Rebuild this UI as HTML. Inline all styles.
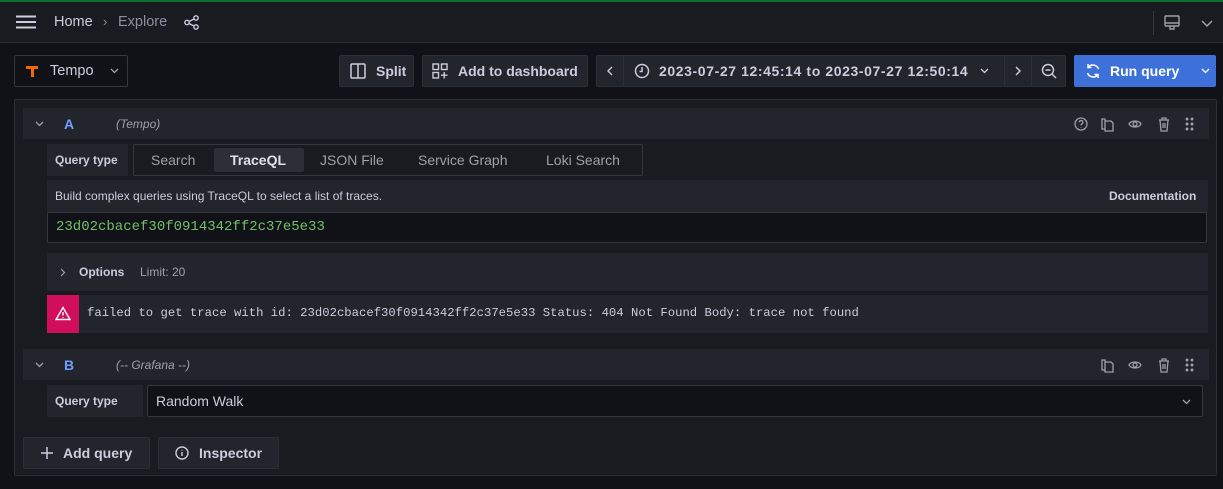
<!DOCTYPE html>
<html><head><style>
*{box-sizing:border-box;margin:0;padding:0}
body{width:1223px;height:489px;background:#111217;font-family:"Liberation Sans",sans-serif;color:#ccccdc;font-size:14px;position:relative;overflow:hidden}
.a{position:absolute}
.btn{position:absolute;background:#22252b;border:1px solid #2c2f36;border-radius:2px;display:flex;align-items:center;color:#ccccdc;font-weight:bold;font-size:14px}
.g{background:#22252b}
svg{display:block}
.mono{font-family:"Liberation Mono","DejaVu Sans Mono",monospace}
</style></head><body>
<div class="a" style="left:0;top:0;width:1223px;height:2px;background:#0f6b2b"></div>
<div class="a" style="left:0;top:2px;width:1223px;height:41px;background:#181b1f;border-bottom:1px solid #2c2f36"></div>
<svg class="a" style="left:16px;top:15px" width="20" height="14"><path d="M0 1.5h20M0 7h20M0 12.5h20" stroke="#ccccdc" stroke-width="2"/></svg>
<div class="a" style="left:54px;top:14px;font-size:14.5px;color:#ccccdc">Home</div>
<div class="a" style="left:103px;top:14px;font-size:13px;color:#8e8e9e">›</div>
<div class="a" style="left:118px;top:14px;font-size:14.5px;color:#8e8e9e">Explore</div>
<svg class="a" style="left:184px;top:15px" width="15" height="15"><g fill="none" stroke="#ccccdc" stroke-width="1.4"><circle cx="3" cy="7.5" r="2.2"/><circle cx="12" cy="3" r="2.2"/><circle cx="12" cy="12" r="2.2"/><path d="M5 6.5l5-2.5M5 8.5l5 2.5"/></g></svg>
<div class="a" style="left:1153px;top:11px;width:1px;height:24px;background:#34373e"></div>
<svg class="a" style="left:1164px;top:15px" width="17" height="16"><g fill="none" stroke="#9fa0a8" stroke-width="1.4"><rect x="1" y="1" width="14" height="10" rx="1"/><path d="M1 8h14M6 11v3h4v-3"/></g></svg>
<svg class="a" style="left:1201px;top:20px" width="12" height="8"><path d="M1 1l5 5 5-5" fill="none" stroke="#9fa0a8" stroke-width="1.5"/></svg>

<div class="btn" style="left:14px;top:55px;width:114px;height:32px;background:#111217;border-color:#34373e;font-weight:normal">
<svg style="margin-left:10px" width="14" height="14"><path d="M1 2h12v3H9v8H6V5H1z" fill="#f46800"/></svg><span style="margin-left:11px;font-size:14.5px">Tempo</span>
<svg style="margin-left:16px" width="9" height="6"><path d="M1 1l3.5 3.5L8 1" fill="none" stroke="#9fa0a8" stroke-width="1.3"/></svg></div>

<div class="btn" style="left:339px;top:55px;width:75px;height:32px"><svg style="margin-left:10px" width="16" height="16"><g fill="none" stroke="#ccccdc" stroke-width="1.5"><rect x="1" y="1" width="14" height="14" rx="1"/><path d="M8 1v14"/></g></svg><span style="margin-left:10px">Split</span></div>
<div class="btn" style="left:422px;top:55px;width:166px;height:32px"><svg style="margin-left:9px" width="16" height="16"><g fill="none" stroke="#ccccdc" stroke-width="1.4"><rect x="1" y="1" width="5.5" height="5.5"/><rect x="9.5" y="1" width="5.5" height="5.5"/><rect x="1" y="9.5" width="5.5" height="5.5"/><path d="M12.2 9v6.5M9 12.2h6.5"/></g></svg><span style="margin-left:10px">Add to dashboard</span></div>

<div class="btn" style="left:596px;top:55px;width:470px;height:32px;padding:0">
<div style="width:27px;height:100%;border-right:1px solid #2c2f36;display:flex;align-items:center;justify-content:center"><svg width="6" height="10"><path d="M5 1L1 5l4 4" fill="none" stroke="#ccccdc" stroke-width="1.4"/></svg></div>
<div style="width:381px;height:100%;border-right:1px solid #2c2f36;display:flex;align-items:center"><svg style="margin-left:10px" width="16" height="16"><g fill="none" stroke="#ccccdc" stroke-width="1.5"><circle cx="8" cy="8" r="6.5"/><path d="M8 4v4.5H5.5"/></g></svg><span style="margin-left:9px;letter-spacing:0.6px">2023-07-27 12:45:14 to 2023-07-27 12:50:14</span><svg style="margin-left:12px" width="9" height="6"><path d="M1 1l3.5 3.5L8 1" fill="none" stroke="#ccccdc" stroke-width="1.3"/></svg></div>
<div style="width:27px;height:100%;border-right:1px solid #2c2f36;display:flex;align-items:center;justify-content:center"><svg width="6" height="10"><path d="M1 1l4 4-4 4" fill="none" stroke="#ccccdc" stroke-width="1.4"/></svg></div>
<div style="flex:1;display:flex;align-items:center;justify-content:center"><svg width="16" height="16"><g fill="none" stroke="#ccccdc" stroke-width="1.5"><circle cx="7" cy="7" r="5.5"/><path d="M4.5 7h5M11 11l4 4"/></g></svg></div></div>

<div class="btn" style="left:1074px;top:55px;width:142px;height:32px;background:#3d71d9;border-color:#3d71d9;color:#fff">
<svg style="margin-left:10px" width="16" height="16"><g fill="none" stroke="#fff" stroke-width="1.5"><path d="M13.5 6A6 6 0 0 0 3 4.5M2.5 10a6 6 0 0 0 10.5 1.5"/><path d="M3 1v3.5h3.5M13 15v-3.5H9.5"/></g></svg><span style="margin-left:9px">Run query</span>
<svg style="margin-left:22px" width="9" height="6"><path d="M1 1l3.5 3.5L8 1" fill="none" stroke="#fff" stroke-width="1.3"/></svg></div>

<div class="a" style="left:14px;top:99px;width:1203px;height:377px;background:#181b1f;border:1px solid #2c2f36;border-radius:2px"></div>

<!-- A -->
<div class="a g" style="left:23px;top:108px;width:1186px;height:31px"></div>
<svg class="a" style="left:35px;top:121px" width="9" height="6"><path d="M1 1l3.5 3.5L8 1" fill="none" stroke="#9fa0a8" stroke-width="1.3"/></svg>
<div class="a" style="left:64px;top:116px;color:#6e9fff;font-weight:bold;font-size:14px">A</div>
<div class="a" style="left:116px;top:117px;color:#9fa0a8;font-style:italic;font-size:12px">(Tempo)</div>
<svg class="a" style="left:1073px;top:116px" width="130" height="16"><g fill="none" stroke="#9fa0a8" stroke-width="1.3"><circle cx="8" cy="8" r="6"/><path d="M6.3 6.3a1.8 1.8 0 1 1 2.4 1.7c-.6.3-.7.6-.7 1.3M8 11v.5"/><path d="M32 5h6l2 2v8h-8zM32 5V3h-3v10h3"/><path d="M56 8c2-4 10-4 12 0c-2 4-10 4-12 0z"/><circle cx="62" cy="8" r="2"/><path d="M86 4h10M89 4V2h4v2M87 4l1 11h6l1-11M90 7v5M92 7v5"/><circle cx="114" cy="3" r=".8" fill="#9fa0a8"/><circle cx="119" cy="3" r=".8" fill="#9fa0a8"/><circle cx="114" cy="8" r=".8" fill="#9fa0a8"/><circle cx="119" cy="8" r=".8" fill="#9fa0a8"/><circle cx="114" cy="13" r=".8" fill="#9fa0a8"/><circle cx="119" cy="13" r=".8" fill="#9fa0a8"/></g></svg>

<div class="a g" style="left:47px;top:144px;width:81px;height:32px;font-size:12px;font-weight:bold;display:flex;align-items:center;padding-left:8px;white-space:nowrap">Query type</div>
<div class="a" style="left:133px;top:144px;width:510px;height:32px;border:1px solid #34373e;border-radius:2px;background:#181b1f"></div>
<div class="a" style="left:214px;top:148px;width:90px;height:24px;background:#2c2f36;border-radius:2px"></div>
<div class="a" style="left:151px;top:152px;color:#9fa0a8;font-size:14px">Search</div>
<div class="a" style="left:230px;top:152px;color:#e0e0e8;font-size:14px;font-weight:bold">TraceQL</div>
<div class="a" style="left:320px;top:152px;color:#9fa0a8;font-size:14px">JSON File</div>
<div class="a" style="left:418px;top:152px;color:#9fa0a8;font-size:14px">Service Graph</div>
<div class="a" style="left:546px;top:152px;color:#9fa0a8;font-size:14px">Loki Search</div>

<div class="a g" style="left:47px;top:180px;width:1161px;height:33px"></div>
<div class="a" style="left:55px;top:189px;font-size:12px;color:#ccccdc">Build complex queries using TraceQL to select a list of traces.</div>
<div class="a" style="left:1109px;top:189px;font-size:12px;color:#ccccdc;font-weight:bold">Documentation</div>
<div class="a" style="left:47px;top:212px;width:1160px;height:31px;background:#111217;border:1px solid #34373e;border-radius:2px"></div>
<div class="a mono" style="left:56px;top:219px;font-size:14px;color:#73bf69">23d02cbacef30f0914342ff2c37e5e33</div>

<div class="a g" style="left:47px;top:253px;width:1161px;height:38px"></div>
<svg class="a" style="left:60px;top:268px" width="6" height="9"><path d="M1 1l3.5 3.5L1 8" fill="none" stroke="#9fa0a8" stroke-width="1.2"/></svg>
<div class="a" style="left:79px;top:265px;font-size:12px;font-weight:bold;color:#ccccdc">Options</div>
<div class="a" style="left:140px;top:265px;font-size:12px;color:#9fa0a8">Limit: 20</div>

<div class="a g" style="left:47px;top:295px;width:1161px;height:38px"></div>
<div class="a" style="left:47px;top:295px;width:32px;height:38px;background:#d10e5c"></div>
<svg class="a" style="left:55px;top:306px" width="16" height="15"><g fill="none" stroke="#fff" stroke-width="1.4"><path d="M8 1.5L15 13.5H1z"/><path d="M8 6v3.5M8 11v.8"/></g></svg>
<div class="a mono" style="left:87px;top:306px;font-size:12.25px;color:#ccccdc">failed to get trace with id: 23d02cbacef30f0914342ff2c37e5e33 Status: 404 Not Found Body: trace not found</div>

<!-- B -->
<div class="a g" style="left:23px;top:349px;width:1186px;height:31px"></div>
<svg class="a" style="left:35px;top:362px" width="9" height="6"><path d="M1 1l3.5 3.5L8 1" fill="none" stroke="#9fa0a8" stroke-width="1.3"/></svg>
<div class="a" style="left:64px;top:357px;color:#6e9fff;font-weight:bold;font-size:14px">B</div>
<div class="a" style="left:116px;top:358px;color:#9fa0a8;font-style:italic;font-size:12px">(-- Grafana --)</div>
<svg class="a" style="left:1097px;top:357px" width="106" height="16"><g fill="none" stroke="#9fa0a8" stroke-width="1.3"><path d="M8 5h6l2 2v8H8zM8 5V3H5v10h3"/><path d="M32 8c2-4 10-4 12 0c-2 4-10 4-12 0z"/><circle cx="38" cy="8" r="2"/><path d="M62 4h10M65 4V2h4v2M63 4l1 11h6l1-11M66 7v5M68 7v5"/><circle cx="90" cy="3" r=".8" fill="#9fa0a8"/><circle cx="95" cy="3" r=".8" fill="#9fa0a8"/><circle cx="90" cy="8" r=".8" fill="#9fa0a8"/><circle cx="95" cy="8" r=".8" fill="#9fa0a8"/><circle cx="90" cy="13" r=".8" fill="#9fa0a8"/><circle cx="95" cy="13" r=".8" fill="#9fa0a8"/></g></svg>

<div class="a g" style="left:47px;top:385px;width:96px;height:32px;font-size:12px;font-weight:bold;display:flex;align-items:center;padding-left:8px">Query type</div>
<div class="a" style="left:147px;top:385px;width:1056px;height:32px;background:#111217;border:1px solid #34373e;border-radius:2px"></div>
<div class="a" style="left:156px;top:393px;font-size:14px;color:#ccccdc">Random Walk</div>
<svg class="a" style="left:1182px;top:399px" width="9" height="6"><path d="M1 1l3.5 3.5L8 1" fill="none" stroke="#9fa0a8" stroke-width="1.3"/></svg>

<div class="btn" style="left:23px;top:437px;width:127px;height:32px"><svg style="margin-left:17px" width="12" height="12"><path d="M6 0v12M0 6h12" stroke="#ccccdc" stroke-width="1.5"/></svg><span style="margin-left:10px">Add query</span></div>
<div class="btn" style="left:158px;top:437px;width:121px;height:32px"><svg style="margin-left:16px" width="14" height="14"><g fill="none" stroke="#ccccdc" stroke-width="1.4"><circle cx="7" cy="7" r="6"/><path d="M7 6v4M7 3.8v.6"/></g></svg><span style="margin-left:10px">Inspector</span></div>
</body></html>
